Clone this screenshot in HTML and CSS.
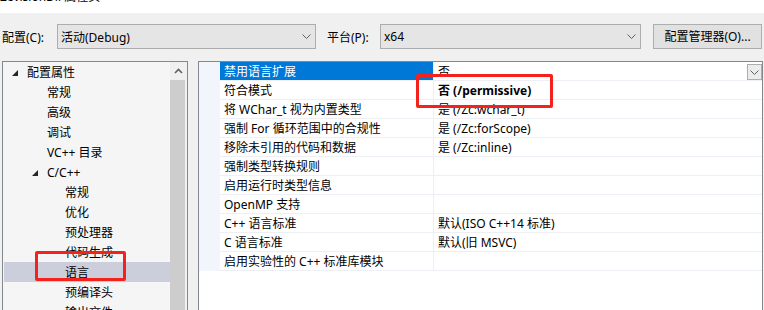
FILE: index.html
```html
<!DOCTYPE html>
<html lang="zh-CN">
<head>
  <meta charset="UTF-8">
  <meta name="viewport" content="width=device-width, initial-scale=1.0">
  <title>ZevisionDll 属性页</title>
  <link rel="stylesheet" href="styles.css">
</head>
<body>
  <div class="titlebar"><span>ZevisionDll 属性页</span></div>

  <div class="toolbar">
    <label class="label-config">配置(C):</label>
    <div class="combo combo-config">
      <span>活动(Debug)</span>
      <svg class="chevron" width="9" height="5" viewBox="0 0 9 5"><path d="M0.5 0.5 L4.5 4.5 L8.5 0.5" fill="none" stroke="#606060" stroke-width="1"/></svg>
    </div>
    <label class="label-platform">平台(P):</label>
    <div class="combo combo-platform">
      <span>x64</span>
      <svg class="chevron" width="9" height="5" viewBox="0 0 9 5"><path d="M0.5 0.5 L4.5 4.5 L8.5 0.5" fill="none" stroke="#606060" stroke-width="1"/></svg>
    </div>
    <div class="button">配置管理器(O)...</div>
  </div>

  <div class="main">
    <div class="tree">
      <ul class="tree-items">
        <li class="level-0"><span class="expander"></span>配置属性</li>
        <li class="level-1">常规</li>
        <li class="level-1">高级</li>
        <li class="level-1">调试</li>
        <li class="level-1">VC++ 目录</li>
        <li class="level-1 has-children"><span class="expander"></span>C/C++</li>
        <li class="level-2">常规</li>
        <li class="level-2">优化</li>
        <li class="level-2">预处理器</li>
        <li class="level-2">代码生成</li>
        <li class="level-2 selected">语言</li>
        <li class="level-2">预编译头</li>
        <li class="level-2">输出文件</li>
      </ul>
      <div class="scrollbar">
        <div class="scroll-up">
          <svg width="9" height="6" viewBox="0 0 9 6"><path d="M1 5 L4.5 1.5 L8 5" fill="none" stroke="#606060" stroke-width="1.6"/></svg>
        </div>
        <div class="thumb"></div>
      </div>
    </div>

    <div class="grid">
      <div class="row active">
        <div class="gutter"></div>
        <div class="name">禁用语言扩展</div>
        <div class="value">
          <span>否</span>
          <div class="drop">
            <svg width="9" height="5" viewBox="0 0 9 5"><path d="M0.5 0.5 L4.5 4.5 L8.5 0.5" fill="none" stroke="#606060" stroke-width="1"/></svg>
          </div>
        </div>
      </div>
      <div class="row">
        <div class="gutter"></div>
        <div class="name">符合模式</div>
        <div class="value bold">否 (/permissive)</div>
      </div>
      <div class="row">
        <div class="gutter"></div>
        <div class="name">将 WChar_t 视为内置类型</div>
        <div class="value">是 (/Zc:wchar_t)</div>
      </div>
      <div class="row">
        <div class="gutter"></div>
        <div class="name">强制 For 循环范围中的合规性</div>
        <div class="value">是 (/Zc:forScope)</div>
      </div>
      <div class="row">
        <div class="gutter"></div>
        <div class="name">移除未引用的代码和数据</div>
        <div class="value">是 (/Zc:inline)</div>
      </div>
      <div class="row">
        <div class="gutter"></div>
        <div class="name">强制类型转换规则</div>
        <div class="value"></div>
      </div>
      <div class="row">
        <div class="gutter"></div>
        <div class="name">启用运行时类型信息</div>
        <div class="value"></div>
      </div>
      <div class="row">
        <div class="gutter"></div>
        <div class="name">OpenMP 支持</div>
        <div class="value"></div>
      </div>
      <div class="row">
        <div class="gutter"></div>
        <div class="name">C++ 语言标准</div>
        <div class="value">默认(ISO C++14 标准)</div>
      </div>
      <div class="row">
        <div class="gutter"></div>
        <div class="name">C 语言标准</div>
        <div class="value">默认(旧 MSVC)</div>
      </div>
      <div class="row">
        <div class="gutter"></div>
        <div class="name">启用实验性的 C++ 标准库模块</div>
        <div class="value"></div>
      </div>
    </div>
  </div>

  <!-- annotation boxes drawn over the screenshot -->
  <div class="mark mark-value"></div>
  <div class="mark mark-tree"></div>
</body>
</html>
```

FILE: styles.css
```css
body {
  margin: 0;
  width: 764px;
  height: 310px;
  overflow: hidden;
  position: relative;
  background-color: #f0f0f0;
  font-family: "Noto Sans", "Noto Sans CJK SC", sans-serif;
  font-size: 12px;
  color: #000;
}

.titlebar {
  height: 13px;
  background-color: #fff;
  overflow: hidden;
}

.titlebar span {
  display: block;
  line-height: 12px;
  margin-top: -9px;
  white-space: nowrap;
}

/* toolbar with the two combos */
.toolbar {
  display: flex;
  align-items: center;
  padding: 11px 0 0 2px;
}

.label-config {
  width: 55px;
}

.label-platform {
  width: 53px;
  margin-left: 11px;
}

.combo {
  height: 25px;
  box-sizing: border-box;
  border: 1px solid #adadad;
  background-color: #e5e5e5;
  display: flex;
  align-items: center;
  justify-content: space-between;
  padding: 0 4px 0 3px;
}

.combo-config {
  width: 259px;
}

.combo-platform {
  width: 261px;
}

.button {
  width: 109px;
  height: 25px;
  box-sizing: border-box;
  margin-left: 12px;
  border: 1px solid #adadad;
  background-color: #e1e1e1;
  text-align: center;
  line-height: 23px;
}

/* tree and property grid */
.main {
  display: flex;
  margin-top: 12px;
  height: 249px;
}

.tree {
  width: 186px;
  margin-left: 2px;
  box-sizing: border-box;
  border: 1px solid #828790;
  border-bottom: none;
  background-color: #f5f5f5;
  display: flex;
  overflow: hidden;
}

.tree-items {
  flex: 1;
  list-style: none;
  margin: 0;
  padding: 0 0 0 1px;
}

.tree-items li {
  height: 20px;
  box-sizing: border-box;
  padding-top: 2px;
  line-height: 18px;
  white-space: nowrap;
  display: flex;
  align-items: center;
}

.level-0 {
  padding-left: 8px;
}

.level-1 {
  padding-left: 43px;
}

.level-1.has-children {
  padding-left: 28px;
}

.level-2 {
  padding-left: 61px;
}

.expander {
  width: 0;
  height: 0;
  border-left: 6px solid transparent;
  border-bottom: 6px solid #262626;
  margin-right: 9px;
}

.tree-items .selected {
  background-color: #cccedb;
}

.scrollbar {
  width: 17px;
  background-color: #f0f0f0;
  display: flex;
  flex-direction: column;
}

.scroll-up {
  height: 18px;
  display: flex;
  align-items: center;
  justify-content: center;
}

.thumb {
  flex: 1;
  width: 15px;
  background-color: #cdcdcd;
}

.grid {
  width: 565px;
  margin-left: 10px;
  box-sizing: border-box;
  border: 1px solid #828790;
  border-bottom: none;
  background-color: #fff;
}

.row {
  display: grid;
  grid-template-columns: 21px 214px 1fr;
  height: 19px;
}

.gutter {
  background-color: #f2f5fc;
}

.name, .value {
  box-sizing: border-box;
  border-bottom: 1px solid #eeeff4;
  padding-top: 1px;
  line-height: 17px;
  white-space: nowrap;
}

.name {
  padding-left: 4px;
  border-right: 1px solid #eeeff4;
}

.value {
  padding-left: 4px;
  display: flex;
}

.row.active .name {
  background-color: #0078d7;
  color: #fff;
}

.drop {
  width: 15px;
  height: 16px;
  margin: 1px 0 0 auto;
  box-sizing: border-box;
  border: 1px solid #adadad;
  background-color: #ececec;
  display: flex;
  align-items: center;
  justify-content: center;
}

.bold {
  font-weight: bold;
}

/* red annotation boxes */
.mark {
  position: absolute;
  box-sizing: border-box;
  border: 3px solid #f3221c;
  border-radius: 2px;
}

.mark-value {
  left: 416px;
  top: 74px;
  width: 137px;
  height: 34px;
}

.mark-tree {
  left: 35px;
  top: 251px;
  width: 91px;
  height: 30px;
}
```
